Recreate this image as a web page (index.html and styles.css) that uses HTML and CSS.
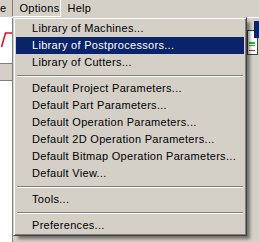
FILE: index.html
```html
<!DOCTYPE html>
<html lang="en">
<head>
  <meta charset="UTF-8" />
  <title>Options menu</title>
  <link rel="stylesheet" href="styles.css">
</head>
<body>
  <div class="window">
    <div class="menubar">
      <span class="mb-item cut">e</span>
      <span class="mb-item open">Options</span>
      <span class="mb-item">Help</span>
    </div>
    <div class="workspace">
      <div class="left-col">
        <div class="graph">
          <svg width="12" height="45" viewBox="0 0 12 45">
            <polyline points="1.5,29 5.5,15 12,15" fill="none" stroke="#e0141e" stroke-width="1.6"/>
          </svg>
        </div>
        <div class="band"></div>
        <div class="sheet"></div>
      </div>
      <div class="mid-col"></div>
      <div class="right-col">
        <svg width="12" height="40" viewBox="0 0 12 40">
          <rect x="0.5" y="10.5" width="10" height="24" fill="#fff" stroke="#404040"/>
          <rect x="7" y="1" width="5" height="17" fill="#0a246a"/>
          <rect x="2" y="22" width="6" height="2" fill="#20c020"/>
          <rect x="2" y="25" width="6" height="1" fill="#20c020"/>
          <rect x="2" y="30" width="6" height="1" fill="#d02020"/>
        </svg>
      </div>
    </div>

    <div class="menu">
      <div class="item">Library of Machines...</div>
      <div class="item active">Library of Postprocessors...</div>
      <div class="item">Library of Cutters...</div>
      <div class="sep"></div>
      <div class="item">Default Project Parameters...</div>
      <div class="item">Default Part Parameters...</div>
      <div class="item">Default Operation Parameters...</div>
      <div class="item">Default 2D Operation Parameters...</div>
      <div class="item">Default Bitmap Operation Parameters...</div>
      <div class="item">Default View...</div>
      <div class="sep"></div>
      <div class="item">Tools...</div>
      <div class="sep"></div>
      <div class="item">Preferences...</div>
    </div>
  </div>
</body>
</html>
```

FILE: styles.css
```css
body {
  margin: 0;
  background: #fff;
  font-family: 'Liberation Sans', Arial, sans-serif;
  font-size: 11px;
  letter-spacing: 0.3px;
  color: #000;
}
.window {
  position: relative;
  width: 259px;
  height: 242px;
  overflow: hidden;
  display: flex;
  flex-direction: column;
}
.menubar {
  height: 17px;
  background: #d4d0c8;
  display: flex;
  align-items: stretch;
  flex-shrink: 0;
}
.mb-item {
  line-height: 16px;
  padding: 0 6px;
}
.mb-item.cut {
  padding: 0 6px 0 0;
}
.mb-item.open {
  border-left: 1px solid #808080;
  border-top: 1px solid #808080;
  border-right: 1px solid #fff;
  border-bottom: 1px solid #fff;
  margin-top: -1px;
  line-height: 16px;
  width: 35px;
}
.workspace {
  flex: 1;
  display: flex;
  background: #d4d0c8;
  border-top: 1px solid #fff;
}
.left-col {
  width: 12px;
  display: flex;
  flex-direction: column;
  border-right: 1px solid #808080;
}
.graph {
  height: 45px;
  background: #fff;
}
.graph svg {
  display: block;
}
.band {
  height: 16px;
  background: #d4d0c8;
  border-top: 1px solid #808080;
  border-bottom: 1px solid #808080;
}
.sheet {
  flex: 1;
  background: #fff;
}
.mid-col {
  flex: 1;
}
.right-col {
  width: 12px;
  padding-top: 2px;
}
.right-col svg {
  display: block;
}

/* popup menu */
.menu {
  position: absolute;
  left: 13px;
  top: 17px;
  width: 228px;
  background: #d4d0c8;
  border: 1px solid;
  border-color: #d4d0c8 #404040 #404040 #d4d0c8;
  padding: 2px 2px 1px 2px;
  box-shadow: inset 1px 1px 0 #fff, inset -1px -1px 0 #808080, 4px 4px 3px -1px rgba(0,0,0,0.45);
}
.item {
  height: 17px;
  line-height: 17px;
  padding-left: 16px;
  white-space: nowrap;
}
.item.active {
  background: #0a246a;
  color: #fff;
}
.sep {
  height: 9px;
  margin: 0 1px;
  display: flex;
  flex-direction: column;
  justify-content: center;
}
.sep::before {
  content: "";
  display: block;
  height: 1px;
  background: #808080;
  border-bottom: 1px solid #fff;
}
```
